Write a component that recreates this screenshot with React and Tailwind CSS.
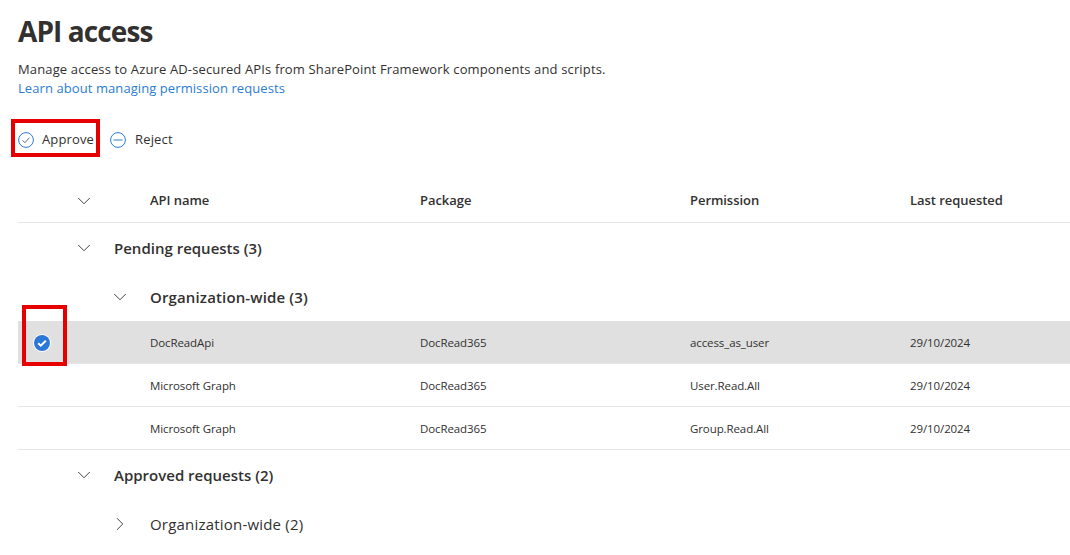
import { ChevronDown, ChevronRight } from 'lucide-react';

const FONT = 'font-["Open_Sans","Noto_Sans",sans-serif]';

const rows = [
  { name: 'DocReadApi', pkg: 'DocRead365', perm: 'access_as_user', date: '29/10/2024', selected: true },
  { name: 'Microsoft Graph', pkg: 'DocRead365', perm: 'User.Read.All', date: '29/10/2024' },
  { name: 'Microsoft Graph', pkg: 'DocRead365', perm: 'Group.Read.All', date: '29/10/2024' },
];

const CircleCheck = () => (
  <svg width="16" height="16" viewBox="0 0 16 16" fill="none" stroke="#2b7cd3" strokeWidth="1">
    <circle cx="8" cy="8" r="7.4" />
    <path d="M4.6 8.4l2.3 2.3 4.5-5" stroke="#5a6b7c" />
  </svg>
);

const CircleMinus = () => (
  <svg width="16" height="16" viewBox="0 0 16 16" fill="none" stroke="#2b7cd3" strokeWidth="1">
    <circle cx="8" cy="8" r="7.4" />
    <path d="M3.5 8h9" />
  </svg>
);

const Selected = () => (
  <svg width="18" height="18" viewBox="0 0 18 18">
    <circle cx="9" cy="9" r="9" fill="#ffffff" />
    <circle cx="9" cy="9" r="8" fill="#2b78d8" />
    <path d="M5.2 9.2l2.6 2.5 5-5" fill="none" stroke="#ffffff" strokeWidth="2" />
  </svg>
);

const GroupRow = ({ label, level, open = true, bold = true }) => {
  const Icon = open ? ChevronDown : ChevronRight;
  const weight = bold ? 'font-semibold' : 'tracking-[0.2px]';
  return (
    <div className={`flex h-[49px] items-center ${level === 0 ? 'pl-[54px]' : 'pl-[90px]'}`}>
      <span className="flex w-[24px] shrink-0 justify-center">
        <Icon size={22} strokeWidth={1} className="text-[#323130]" />
      </span>
      <span className={`ml-[18px] pt-[1px] text-[15px] text-[#323130] ${weight} ${bold && level === 1 ? 'tracking-[0.14px]' : ''}`}>
        {label}
      </span>
    </div>
  );
};

export default function App() {
  return (
    <div className={`relative h-[555px] w-[1070px] overflow-hidden bg-white pl-[18px] ${FONT}`}>
      <h1 className="pt-[12px] text-[28px] leading-[38px] font-bold tracking-[-0.9px] text-[#323130]">API access</h1>
      <p className="mt-[10px] text-[13px] leading-[19px] tracking-[0.14px] text-[#323130]">
        Manage access to Azure AD-secured APIs from SharePoint Framework components and scripts.
      </p>
      <a className="block text-[13px] leading-[19px] tracking-[0.08px] text-[#2b7cd3]">Learn about managing permission requests</a>

      <div className="mt-[22px] flex h-[40px] items-center text-[13px] tracking-[0.14px] text-[#323130]">
        <CircleCheck />
        <span className="ml-[8px]">Approve</span>
        <span className="ml-[16px]"><CircleMinus /></span>
        <span className="ml-[9px]">Reject</span>
      </div>

      <div className="mt-[19px] grid h-[44px] grid-cols-[132px_270px_270px_220px_1fr] items-center border-b border-[#e6e6e6] text-[13px] font-semibold tracking-[-0.05px] text-[#323130]">
        <span className="pl-[55px]"><ChevronDown size={22} strokeWidth={1} /></span>
        <span>API name</span>
        <span>Package</span>
        <span>Permission</span>
        <span>Last requested</span>
      </div>

      <GroupRow label="Pending requests (3)" level={0} />
      <GroupRow label="Organization-wide (3)" level={1} />

      {rows.map((row, i) => (
        <div
          key={i}
          className={`grid h-[43px] grid-cols-[132px_270px_270px_220px_1fr] items-center border-b border-[#e6e6e6] pt-[1px] text-[11.5px] tracking-[-0.1px] text-[#323130] ${row.selected ? 'bg-[#e0e0e0]' : ''}`}
        >
          <span className="pl-[15px]">{row.selected && <Selected />}</span>
          <span>{row.name}</span>
          <span>{row.pkg}</span>
          <span>{row.perm}</span>
          <span>{row.date}</span>
        </div>
      ))}

      <GroupRow label="Approved requests (2)" level={0} />
      <GroupRow label="Organization-wide (2)" level={1} open={false} bold={false} />

      {/* red highlight boxes drawn over the screenshot */}
      <div className="absolute top-[119px] left-[11px] h-[38px] w-[89px] border-[4px] border-[#e60000]" />
      <div className="absolute top-[305px] left-[22px] h-[61px] w-[45px] border-[4px] border-[#e60000]" />
    </div>
  );
}
